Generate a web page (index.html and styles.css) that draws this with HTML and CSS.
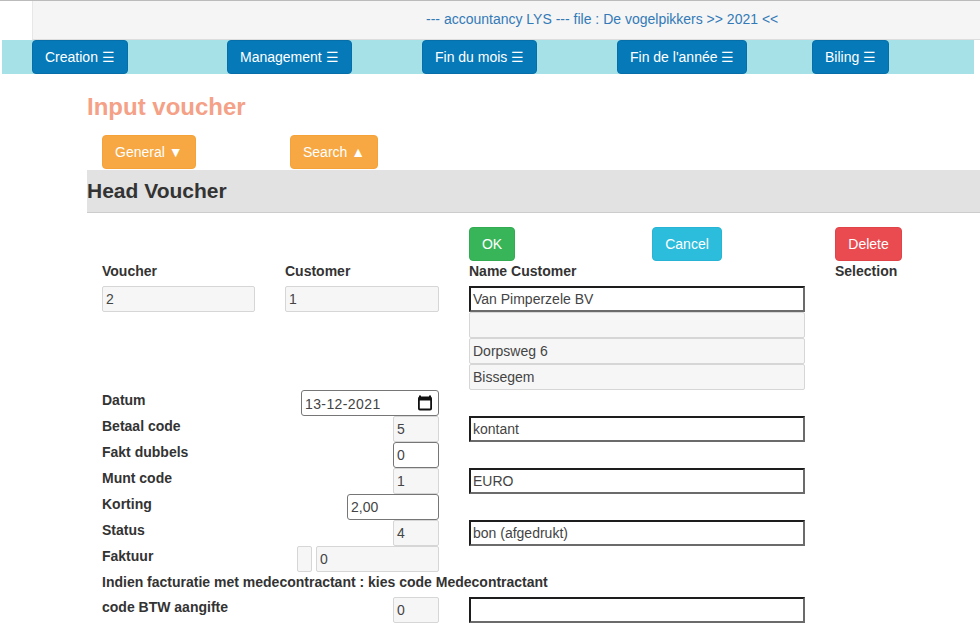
FILE: index.html
```html
<!DOCTYPE html>
<html lang="en">

<head>
    <meta charset="UTF-8">
    <title>Input voucher</title>
    <link rel="stylesheet" href="styles.css">
</head>

<body>
    <div class="top-bar">
        <a class="top-title">--- accountancy LYS --- file : De vogelpikkers &gt;&gt; 2021 &lt;&lt;</a>
    </div>
    <div class="menu-bar">
        <div class="menu-cell"><button class="btn btn-menu">Creation ☰</button></div>
        <div class="menu-cell"><button class="btn btn-menu">Management ☰</button></div>
        <div class="menu-cell"><button class="btn btn-menu">Fin du mois ☰</button></div>
        <div class="menu-cell"><button class="btn btn-menu">Fin de l'année ☰</button></div>
        <div class="menu-cell"><button class="btn btn-menu">Biling ☰</button></div>
    </div>
    <div class="content">
        <h2 class="page-title">Input voucher</h2>
        <div class="tabs">
            <div class="tab-cell tab-cell-first"><button class="btn btn-orange">General ▼</button></div>
            <div class="tab-cell"><button class="btn btn-orange">Search ▲</button></div>
        </div>
        <h3 class="section-head">Head Voucher</h3>
        <div class="form">
            <div class="actions">
                <div><button class="btn btn-green">OK</button></div>
                <div><button class="btn btn-blue">Cancel</button></div>
                <div><button class="btn btn-red">Delete</button></div>
            </div>
            <div class="row row-labels">
                <label>Voucher</label>
                <label>Customer</label>
                <label>Name Customer</label>
                <div></div>
                <label>Selection</label>
            </div>
            <div class="row">
                <div class="cell"><input class="field" value="2" readonly></div>
                <div class="cell"><input class="field" value="1" readonly></div>
                <div class="cell-wide"><input class="field edit" value="Van Pimperzele BV"></div>
            </div>
            <div class="row">
                <div></div><div></div>
                <div class="cell-wide"><input class="field" readonly></div>
            </div>
            <div class="row">
                <div></div><div></div>
                <div class="cell-wide"><input class="field" value="Dorpsweg 6" readonly></div>
            </div>
            <div class="row">
                <div></div><div></div>
                <div class="cell-wide"><input class="field" value="Bissegem" readonly></div>
            </div>
            <div class="row">
                <label>Datum</label>
                <div class="cell right"><div class="field date w-138">13-12-2021
                    <svg class="cal" width="16" height="16" viewBox="0 0 16 16"><path d="M3 0.5v2M13 0.5v2" stroke="#111" stroke-width="2" fill="none"/><rect x="1.9" y="2.5" width="12.2" height="12" rx="1" fill="none" stroke="#111" stroke-width="1.8"/><rect x="2" y="2.5" width="12" height="3" fill="#111"/></svg>
                </div></div>
            </div>
            <div class="row">
                <label>Betaal code</label>
                <div class="cell right"><input class="field w-46" value="5" readonly></div>
                <div class="cell-wide"><input class="field edit" value="kontant"></div>
            </div>
            <div class="row">
                <label>Fakt dubbels</label>
                <div class="cell right"><input class="field plain w-46" value="0"></div>
            </div>
            <div class="row">
                <label>Munt code</label>
                <div class="cell right"><input class="field w-46" value="1" readonly></div>
                <div class="cell-wide"><input class="field edit" value="EURO"></div>
            </div>
            <div class="row">
                <label>Korting</label>
                <div class="cell right"><input class="field plain w-92" value="2,00"></div>
            </div>
            <div class="row">
                <label>Status</label>
                <div class="cell right"><input class="field w-46" value="4" readonly></div>
                <div class="cell-wide"><input class="field edit" value="bon (afgedrukt)"></div>
            </div>
            <div class="row">
                <label>Faktuur</label>
                <div class="cell right pair">
                    <input class="field w-15" readonly>
                    <input class="field w-123" value="0" readonly>
                </div>
            </div>
            <div class="note">Indien facturatie met medecontractant : kies code Medecontractant</div>
            <div class="row">
                <label>code BTW aangifte</label>
                <div class="cell right"><input class="field w-46" value="0" readonly></div>
                <div class="cell-wide"><input class="field edit"></div>
            </div>
        </div>
    </div>
</body>

</html>
```

FILE: styles.css
```css
* {
    box-sizing: border-box;
}
html,
body {
    height: 632px;
    overflow: hidden;
}
body {
    margin: 0;
    font-family: "Liberation Sans", Arial, sans-serif;
    font-size: 14px;
    color: #333333;
    background-color: #ffffff;
    border-top: 1px solid #bbbbbb;
}
.top-bar {
    margin-left: 32px;
    height: 39px;
    padding-left: 393px;
    line-height: 37px;
    background-color: #f5f5f5;
    border-left: 1px solid #e7e7e7;
    border-bottom: 1px solid #dddddd;
}
.top-title {
    color: #337ab7;
}
.menu-bar {
    display: grid;
    grid-template-columns: repeat(5, 195px);
    margin-left: 2px;
    width: 972px;
    height: 34px;
    padding-left: 30px;
    background-color: #a6e1e8;
}
.btn {
    display: inline-block;
    height: 34px;
    padding: 0 12px;
    font-family: inherit;
    font-size: 14px;
    color: #ffffff;
    border: 1px solid transparent;
    border-radius: 4px;
}
.btn-menu {
    background-color: #0679b8;
    border-color: #066fa9;
}
.btn-orange {
    background-color: #f7a843;
    border-color: #f5a338;
}
.btn-green {
    background-color: #38b559;
    border-color: #33ab53;
    width: 46px;
    padding: 0;
}
.btn-blue {
    background-color: #2cbcdc;
    border-color: #28b4d4;
    width: 70px;
    padding: 0;
}
.btn-red {
    background-color: #e94b50;
    border-color: #e04449;
    width: 67px;
    padding: 0;
}
.content {
    margin-left: 87px;
}
.page-title {
    margin: 0;
    padding-top: 19px;
    height: 61px;
    font-size: 24px;
    line-height: 27px;
    font-weight: bold;
    color: #f4a187;
}
.tabs {
    display: flex;
    height: 35px;
    padding-left: 15px;
}
.tab-cell-first {
    width: 188px;
}
.section-head {
    margin: 0;
    height: 43px;
    font-size: 21px;
    line-height: 42px;
    font-weight: bold;
    background-color: #e2e2e2;
    border-bottom: 1px solid #cccccc;
}
.form {
    padding: 14px 0 0 15px;
}
.actions,
.row {
    display: grid;
    grid-template-columns: 183px 184px 183px 183px 183px;
}
.actions {
    grid-template-columns: 183px 183px 183px;
    margin-left: 367px;
    height: 34px;
}
.row {
    height: 26px;
}
.row-labels {
    height: 25px;
}
label,
.note {
    font-weight: bold;
    line-height: 20px;
}
.cell {
    padding-right: 30px;
}
.right {
    display: flex;
    justify-content: flex-end;
}
.cell-wide {
    grid-column: span 2;
    width: 336px;
}
.field {
    display: block;
    width: 100%;
    height: 26px;
    padding: 0 3px;
    font-family: inherit;
    font-size: 14px;
    line-height: 24px;
    color: #444444;
    background-color: #f6f6f6;
    border: 1px solid #d6d6d6;
    border-radius: 2px;
    outline: none;
}
.edit {
    background-color: #ffffff;
    border: 2px solid;
    border-color: #1d1d1d #6b6b6b #6b6b6b #1d1d1d;
    border-radius: 0;
    padding: 0 2px;
}
.plain {
    background-color: #ffffff;
    border-color: #767676;
    border-radius: 3px;
}
.date {
    position: relative;
    padding-top: 1px;
    background-color: #ffffff;
    border-color: #767676;
    border-radius: 3px;
    letter-spacing: 0.4px;
}
.cal {
    position: absolute;
    right: 5px;
    top: 4px;
}
.w-138 {
    width: 138px;
}
.w-46 {
    width: 46px;
}
.w-92 {
    width: 92px;
}
.w-15 {
    width: 15px;
}
.w-123 {
    width: 123px;
}
.pair {
    gap: 4px;
}
.note {
    height: 25px;
}
```
